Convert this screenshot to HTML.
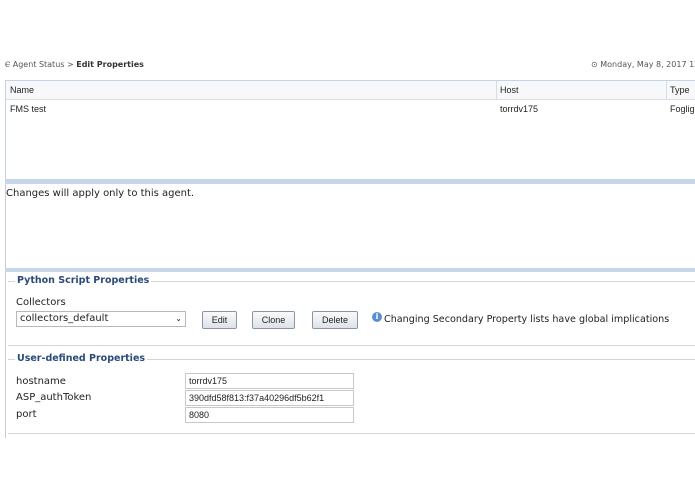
<!DOCTYPE html>
<html><head><style>
body{margin:0;width:695px;height:494px;background:#fff;position:relative;overflow:hidden;font-family:"DejaVu Sans","Liberation Sans",sans-serif;color:#222}
.a{position:absolute;white-space:nowrap}
.s{font-size:8px}
.t{font-size:9px;font-family:"Liberation Sans",sans-serif}
.btn{position:absolute;top:311px;height:16px;border:1px solid #8a96a6;border-radius:2px;background:linear-gradient(#fafafa,#dde2e8);font-size:9px;text-align:center;line-height:16px;font-family:"Liberation Sans",sans-serif}
.inp{position:absolute;left:185px;height:16px;border:1px solid #c8c8c8;font-size:9px;line-height:15px;padding-left:3px;box-sizing:border-box;width:169px;font-family:"Liberation Sans",sans-serif}
.lbl{position:absolute;left:16px;font-size:10px}
.leg{position:absolute;font-size:9.5px;font-weight:bold;color:#2a4a7a;background:#fff;padding:0 2px}
</style></head><body>
<div class="a s" style="left:5px;top:60px;color:#555">Ⲉ Agent Status &gt; <b style="color:#333">Edit Properties</b></div>
<div class="a s" style="left:591px;top:60px;color:#555">⊙ Monday, May 8, 2017 12:6</div>
<div class="a" style="left:5px;top:80px;width:700px;height:100px;border:1px solid #c5d3e3;box-sizing:border-box"></div>
<div class="a" style="left:6px;top:81px;width:700px;height:18px;background:#f6f8fa;border-bottom:1px solid #d8dde4"></div>
<div class="a" style="left:496px;top:81px;width:1px;height:18px;background:#d8dde4"></div>
<div class="a" style="left:666px;top:81px;width:1px;height:18px;background:#d8dde4"></div>
<div class="a t" style="left:10px;top:85px">Name</div>
<div class="a t" style="left:500px;top:85px">Host</div>
<div class="a t" style="left:670px;top:85px">Type</div>
<div class="a t" style="left:10px;top:104px">FMS test</div>
<div class="a t" style="left:500px;top:104px">torrdv175</div>
<div class="a t" style="left:670px;top:104px">Foglig</div>
<div class="a" style="left:5px;top:180px;width:700px;height:4px;background:#c7d6e8"></div>
<div class="a" style="left:5px;top:184px;width:1px;height:254px;background:#c8ccd2"></div>
<div class="a" style="left:6px;top:188px;font-size:10px">Changes will apply only to this agent.</div>
<div class="a" style="left:5px;top:268px;width:700px;height:4px;background:#c7d6e8"></div>
<div class="a" style="left:8px;top:281px;width:700px;height:63px;border-top:1px solid #d4d4d4;border-bottom:1px solid #d4d4d4"></div>
<div class="leg" style="left:15px;top:275px">Python Script Properties</div>
<div class="lbl" style="top:297px">Collectors</div>
<div class="a" style="left:16px;top:311px;width:170px;height:16px;border:1px solid #b8b8b8;box-sizing:border-box;font-size:10px;line-height:14px;padding-left:3px">collectors_default<span style="position:absolute;right:3px;top:0;font-size:8px">⌄</span></div>
<div class="btn" style="left:202px;width:33px">Edit</div>
<div class="btn" style="left:252px;width:41px">Clone</div>
<div class="btn" style="left:312px;width:44px">Delete</div>
<div class="a" style="left:372px;top:312px;width:10px;height:10px;border-radius:50%;background:#5b8fd0;color:#fff;font-size:8px;line-height:10px;text-align:center;font-weight:bold">i</div>
<div class="a" style="left:384px;top:314px;font-size:9.6px">Changing Secondary Property lists have global implications</div>
<div class="a" style="left:8px;top:359px;width:700px;height:73px;border-top:1px solid #d4d4d4;border-bottom:1px solid #d4d4d4"></div>
<div class="leg" style="left:15px;top:353px">User-defined Properties</div>
<div class="lbl" style="top:376px">hostname</div>
<div class="lbl" style="top:392px">ASP_authToken</div>
<div class="lbl" style="top:409px">port</div>
<div class="inp" style="top:373px">torrdv175</div>
<div class="inp" style="top:390px">390dfd58f813:f37a40296df5b62f1</div>
<div class="inp" style="top:407px">8080</div>
</body></html>
